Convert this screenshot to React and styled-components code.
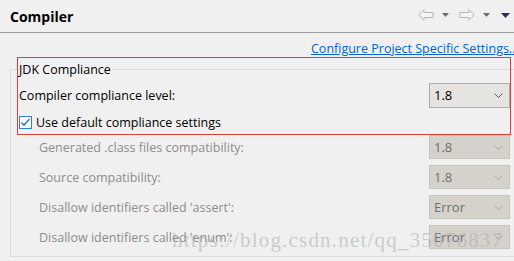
import styled, { createGlobalStyle } from "styled-components";

const GlobalStyle = createGlobalStyle`
  html, body {
    margin: 0;
    padding: 0;
    width: 514px;
    height: 261px;
    overflow: hidden;
    background: #f0f0f0;
    font-family: "Open Sans", "Noto Sans", sans-serif;
    font-size: 12.5px;
    color: #000;
  }
`;

const Page = styled.div`
  position: relative;
  width: 514px;
  height: 261px;
  overflow: hidden;
`;

const Header = styled.div`
  display: flex;
  align-items: center;
  height: 32px;
  padding: 0 4px 0 10px;
  border-bottom: 1px solid #a0a0a0;
`;

const Title = styled.div`
  flex: 1;
  font-weight: bold;
  font-size: 14px;
`;

const Tools = styled.div`
  display: flex;
  align-items: center;
  padding-bottom: 2px;
`;

const ToolIcon = styled.svg`
  display: block;
  margin-left: ${(p) => p.$gap || 0}px;
`;

const LinkRow = styled.div`
  height: 24px;
  padding-left: 311px;
  white-space: nowrap;
  overflow: hidden;
  display: flex;
  align-items: flex-end;
`;

const Link = styled.a`
  color: #0066cc;
  text-decoration: underline;
  cursor: pointer;
`;

const Group = styled.fieldset`
  margin: 4px 0 0 10px;
  padding: 0 0 4px 8px;
  width: 520px;
  border: 1px solid #dcdcdc;
  border-right: none;
  box-sizing: border-box;
  display: flex;
  flex-direction: column;
`;

const Legend = styled.legend`
  padding: 0 1px 0 0;
  line-height: 17px;
  color: #000;
`;

const Row = styled.div`
  display: flex;
  align-items: center;
  flex: none;
  height: ${(p) => p.$h || 30}px;
  margin-top: ${(p) => p.$mt || 0}px;
  width: 491px;
  padding-left: ${(p) => (p.$indent ? 20 : 0)}px;
  box-sizing: border-box;
  color: ${(p) => (p.$disabled ? "#8d8d8d" : "#000")};
`;

const Label = styled.div`
  flex: 1;
  white-space: nowrap;
`;

const Combo = styled.div`
  display: flex;
  align-items: center;
  justify-content: space-between;
  width: 81px;
  height: ${(p) => (p.$disabled ? 24 : 25)}px;
  box-sizing: border-box;
  padding: 0 6px 0 4px;
  background: ${(p) => (p.$disabled ? "#d5d2cc" : "#e5e4e0")};
  border: 1px solid ${(p) => (p.$disabled ? "#c8c5bf" : "#adadad")};
  color: ${(p) => (p.$disabled ? "#707070" : "#000")};
  font-size: 13px;
`;

const CheckRow = styled.label`
  display: flex;
  align-items: center;
  flex: none;
  gap: 4px;
  height: 23px;
  padding-top: 3px;
  box-sizing: border-box;
`;

const RedBox = styled.div`
  position: absolute;
  left: 17px;
  top: 57px;
  width: 494px;
  height: 78px;
  border: 1px solid #e53c3c;
  box-sizing: border-box;
  pointer-events: none;
`;

const Watermark = styled.div`
  position: absolute;
  left: 172px;
  top: 228px;
  font-family: "Liberation Serif", serif;
  font-size: 21px;
  letter-spacing: 1.2px;
  color: rgba(165, 165, 165, 0.5);
  white-space: nowrap;
  pointer-events: none;
`;

const Chevron = ({ disabled }) => (
  <svg width="9" height="5" viewBox="0 0 9 5">
    <path d="M0.5 0.5 L4.5 4.5 L8.5 0.5" fill="none" stroke={disabled ? "#a8a6a2" : "#555"} strokeWidth="1" />
  </svg>
);

const Select = ({ value, disabled }) => (
  <Combo $disabled={disabled}>
    <span>{value}</span>
    <Chevron disabled={disabled} />
  </Combo>
);

const Checkbox = () => (
  <svg width="13" height="13" viewBox="0 0 13 13">
    <rect x="0.5" y="0.5" width="12" height="12" fill="#fff" stroke="#2f7fd2" />
    <path d="M2.5 6.5 L5 9.2 L10.5 3" fill="none" stroke="#1f6fc9" strokeWidth="1.3" />
  </svg>
);

const disabledRows = [
  ["Generated .class files compatibility:", "1.8"],
  ["Source compatibility:", "1.8"],
  ["Disallow identifiers called 'assert':", "Error"],
  ["Disallow identifiers called 'enum':", "Error"],
];

export default function App() {
  return (
    <Page>
      <GlobalStyle />
      <Header>
        <Title>Compiler</Title>
        <Tools>
          <ToolIcon width="16" height="12" viewBox="0 0 16 12">
            <path d="M0.8 6 L6 0.8 L6 3.5 L15 3.5 L15 8.5 L6 8.5 L6 11.2 Z" fill="#f4f4f4" stroke="#b4b4b4" />
          </ToolIcon>
          <ToolIcon $gap="8" width="7" height="4" viewBox="0 0 7 4">
            <path d="M0 0 L7 0 L3.5 4 Z" fill="#6e6e6e" />
          </ToolIcon>
          <ToolIcon $gap="10" width="16" height="12" viewBox="0 0 16 12">
            <path d="M15.2 6 L10 0.8 L10 3.5 L1 3.5 L1 8.5 L10 8.5 L10 11.2 Z" fill="#f4f4f4" stroke="#b4b4b4" />
          </ToolIcon>
          <ToolIcon $gap="8" width="7" height="4" viewBox="0 0 7 4">
            <path d="M0 0 L7 0 L3.5 4 Z" fill="#6e6e6e" />
          </ToolIcon>
          <ToolIcon $gap="11" width="9" height="5" viewBox="0 0 9 5">
            <path d="M0 0 L9 0 L4.5 5 Z" fill="#3b2558" />
          </ToolIcon>
        </Tools>
      </Header>
      <LinkRow>
        <Link>Configure Project Specific Settings...</Link>
      </LinkRow>
      <Group>
        <Legend>JDK Compliance</Legend>
        <Row $h={28} $mt={3}>
          <Label>Compiler compliance level:</Label>
          <Select value="1.8" />
        </Row>
        <CheckRow>
          <Checkbox />
          <span>Use default compliance settings</span>
        </CheckRow>
        {disabledRows.map(([label, value]) => (
          <Row key={label} $indent $disabled>
            <Label>{label}</Label>
            <Select value={value} disabled />
          </Row>
        ))}
      </Group>
      <RedBox />
      <Watermark>https://blog.csdn.net/qq_35076837</Watermark>
    </Page>
  );
}
